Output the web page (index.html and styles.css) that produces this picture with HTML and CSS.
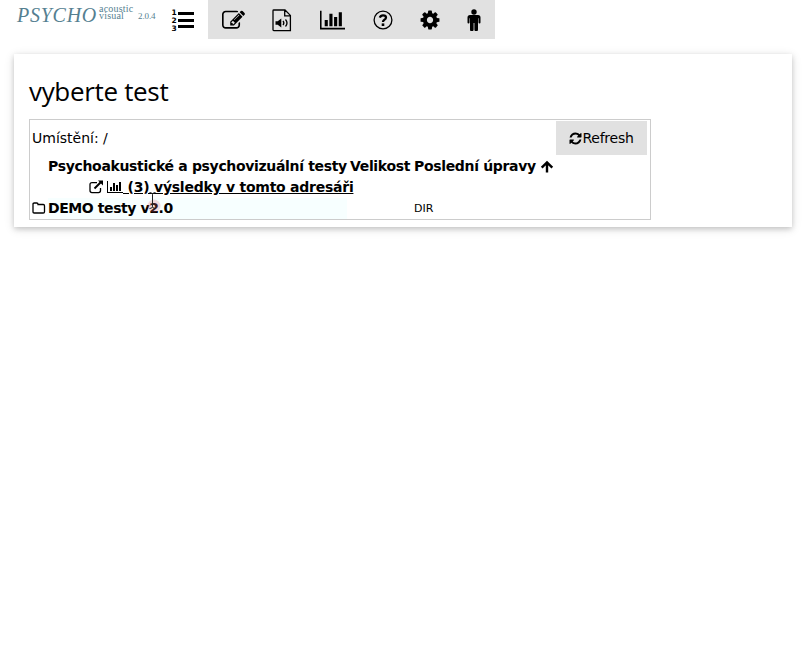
FILE: index.html
```html
<!DOCTYPE html>
<html lang="cs">
<head>
<meta charset="utf-8">
<title>Psycho</title>
<link rel="stylesheet" href="styles.css">
</head>
<body>
<svg class="defs" aria-hidden="true">
  <symbol id="chart" viewBox="0 0 2048 1792"><path d="M640 896v512h-256v-512h256zm384-512v1024h-256v-1024h256zm1024 1152v128h-2048v-1536h128v1408h1920zm-640-896v768h-256v-768h256zm384-384v1152h-256v-1152h256z"/></symbol>
</svg>
<header class="bar">
  <div class="brand"><span class="name">PSYCHO</span><span class="kind"><span>acoustic</span><span>visual</span></span><span class="version">2.0.4</span></div>
  <div class="current"><svg width="24" height="24" viewBox="0 0 24 24"><path d="M7 3h16v3H7zM7 10h16v3H7zM7 16h16v3H7z"/><g class="digits"><text x="0.500" y="6">1</text><text x="0.500" y="14">2</text><text x="0.500" y="22">3</text></g></svg></div>
  <nav class="menu">
    <a><svg width="23" height="23" viewBox="0 0 1792 1792"><path d="M888 1184l116-116-152-152-116 116v56h96v96h56zm440-720q-16-16-33 1l-350 350q-17 17-1 33t33-1l350-350q17-17 1-33zm80 594v190q0 119-84.5 203.5t-203.5 84.5h-832q-119 0-203.5-84.5t-84.5-203.5v-832q0-119 84.5-203.5t203.5-84.5h832q63 0 117 25 15 7 18 23 3 17-9 29l-49 49q-14 14-32 8-23-6-45-6h-832q-66 0-113 47t-47 113v832q0 66 47 113t113 47h832q66 0 113-47t47-113v-126q0-13 9-22l64-64q15-15 35-7t20 29zm-96-738l288 288-672 672h-288v-288zm444 132l-92 92-288-288 92-92q28-28 68-28t68 28l152 152q28 28 28 68t-28 68z"/></svg></a>
    <a><svg class="line" width="20" height="23" viewBox="0 0 20 23"><path d="M1.800 1h11.200l5.400 5.400v15.200H1.800a.8.8 0 0 1-.8-.8V1.800a.8.8 0 0 1 .8-.8zM12.700 1v5.800h5.700M11 12q1.700 2 0 4M13.500 10.500q3 3.500 0 7"/><path class="solid" d="M3.500 12.300h2.200L9.300 9.500v9l-3.600-2.800H3.500z"/></svg></a>
    <a><svg width="25" height="22"><use href="#chart"/></svg></a>
    <a><svg class="line" width="20" height="20" viewBox="0 0 20 20"><circle cx="10" cy="10" r="8.900"/><path class="hook" d="M6.800 7.600q.8-2.300 3.200-2.300 3 0 3 2.300 0 1.400-1.600 2.200-1.400.8-1.400 2.300"/><path class="solid" d="M8.700 13.400h2.600V16H8.700z"/></svg></a>
    <a><svg width="22" height="22" viewBox="0 0 1792 1792"><path d="M1152 896q0-106-75-181t-181-75-181 75-75 181 75 181 181 75 181-75 75-181zm512-109v222q0 12-8 23t-20 13l-185 28q-19 54-39 91 35 50 107 138 10 12 10 25t-9 23q-27 37-99 108t-94 71q-12 0-26-9l-138-108q-44 23-91 38-16 136-29 186-7 28-36 28h-222q-14 0-24.500-8.500t-11.500-21.500l-28-184q-49-16-90-37l-141 107q-10 9-25 9-14 0-25-11-126-114-165-168-7-10-7-23 0-12 8-23 15-21 51-66.500t54-70.500q-27-50-41-99l-183-27q-13-2-21-12.500t-8-23.500v-222q0-12 8-23t19-13l186-28q14-46 39-92-40-57-107-138-10-12-10-24 0-10 9-23 26-36 98.500-107.500t94.500-71.500q13 0 26 10l138 107q44-23 91-38 16-136 29-186 7-28 36-28h222q14 0 24.500 8.500t11.500 21.500l28 184q49 16 90 37l142-107q9-9 24-9 13 0 25 10 129 119 165 170 7 8 7 22 0 12-8 23-15 21-51 66.500t-54 70.500q26 50 41 98l183 28q13 2 21 12.500t8 23.500z"/></svg></a>
    <a><svg width="14" height="22" viewBox="0 0 14 22"><circle cx="7" cy="3" r="2.700"/><path d="M3 6h8q2.500 0 2.500 2.500v5a1 1 0 0 1-2 0V9.200H11v11.300a1.200 1.200 0 0 1-3.600 0V14h-.8v6.500a1.200 1.200 0 0 1-3.600 0V9.200h-.5v4.300a1 1 0 0 1-2 0v-5Q.5 6 3 6z"/></svg></a>
  </nav>
</header>
<main class="card">
  <h1><span>vyberte test</span></h1>
  <section class="browser">
    <div class="location"><span class="path">Umístění: /</span>
      <button><svg width="13" height="13" viewBox="64 64 1664 1664"><path d="M1639 1056q0 5-1 7-64 268-268 434.500t-478 166.500q-146 0-282.500-55t-243.500-157l-129 129q-19 19-45 19t-45-19-19-45v-448q0-26 19-45t45-19h448q26 0 45 19t19 45-19 45l-137 137q71 66 161 102t187 36q134 0 250-65t186-179q11-17 53-117 8-23 30-23h192q13 0 22.500 9.500t9.500 22.500zm25-800v448q0 26-19 45t-45 19h-448q-26 0-45-19t-19-45 19-45l138-138q-148-137-349-137-134 0-250 65t-186 179q-11 17-53 117-8 23-30 23h-199q-13 0-22.500-9.500t-9.500-22.500v-7q65-268 270-434.500t480-166.500q146 0 284 55.500t245 156.500l130-129q19-19 45-19t45 19 19 45z"/></svg><span>Refresh</span></button>
    </div>
    <div class="row head"><span></span><span class="title">Psychoakustické a psychovizuální testy</span><span class="size">Velikost</span><span class="date"><span>Poslední úpravy</span><svg width="14" height="14" viewBox="0 0 14 14"><path class="arrow" d="M7 12.500V2.500M1.700 7.700 7 2.400l5.300 5.300"/></svg></span></div>
    <div class="results"><svg class="line" width="15" height="14" viewBox="0 0 15 14"><path d="M8 2.600H3Q1 2.600 1 4.600v6Q1 12.600 3 12.600h6.500q2 0 2-2V8"/><path class="share" d="M5.500 8.500 12 2"/><path class="solid" d="M9 .5h5v5z"/></svg><a><svg width="16" height="14"><use href="#chart"/></svg><span>&nbsp;(3) výsledky v tomto adresáři</span></a></div>
    <div class="row item"><svg class="line" width="15" height="14" viewBox="0 0 15 14"><path d="M1 3.200Q1 2 2.200 2h2.600Q6 2 6 3.200v.3h5.300q1.200 0 1.200 1.200v6.100q0 1.200-1.200 1.200H2.200Q1 12 1 10.800z"/></svg><span class="folder">DEMO testy v2.0<svg class="pointer" width="16" height="25" viewBox="0 0 16 25"><circle cx="9" cy="17" r="6.500"/><path d="M4.500 3.500q3 0 3 2 0-2 3-2M7.500 5.500v12M4.500 19.500q3 0 3-2 0 2 3 2"/></svg></span><span></span><span class="dir">DIR</span></div>
  </section>
</main>
</body>
</html>
```
FILE: styles.css
```css
body { margin: 0; min-height: 648px; background: #fff; color: #000; font: 14px/21px "DejaVu Sans", sans-serif; }
svg { display: block; flex: none; }
.defs { width: 0; height: 0; overflow: hidden; position: absolute; }
.line { fill: none; stroke: #000; stroke-width: 1.3; }
.solid { fill: #000; stroke: none; }
.bar { display: flex; height: 39px; }
.brand { display: flex; width: 154px; padding-left: 17px; color: #557f91; font-family: "Liberation Serif", serif; }
.name { width: 82px; font-size: 20px; line-height: 31px; font-style: italic; letter-spacing: 0.75px; }
.kind { display: flex; flex-direction: column; width: 39px; padding-top: 5px; font-size: 10px; line-height: 7px; letter-spacing: 0.2px; }
.version { font-size: 9px; line-height: 32px; letter-spacing: -0.1px; }
.current { width: 37px; padding-top: 9px; }
.digits { font: bold 7.5px "DejaVu Sans", sans-serif; }
.menu { display: grid; grid-template-columns: 50px 48px 53px 48px 46px 42px; width: 287px; background: #e1e1e1; }
.menu a { display: flex; align-items: center; justify-content: center; padding-top: 1px; }
.menu a:last-child { padding-right: 1px; }
.hook { stroke-width: 2.3; }
.card { box-sizing: border-box; width: 778px; height: 173px; margin: 15px 0 0 14px; padding: 18px 15px 7px; background: #fff; box-shadow: 0 2px 5px rgba(0,0,0,.16), 0 2px 10px rgba(0,0,0,.12); }
h1 { margin: 0; height: 47px; font: 26px/39px "Open Sans", "Noto Sans", sans-serif; letter-spacing: -0.33px; }
.browser { box-sizing: border-box; width: 622px; height: 101px; border: 1px solid #ccc; padding: 1px 3px 0 2px; }
.location { display: flex; justify-content: space-between; align-items: center; height: 34px; }
.path { letter-spacing: 0; }
button { display: flex; align-items: center; justify-content: center; width: 91px; height: 34px; padding: 0; border: 0; background: #e1e1e1; color: #000; font: inherit; letter-spacing: -0.25px; }
.row { display: grid; grid-template-columns: 16px 302px 64px 1fr; align-items: center; height: 21px; white-space: nowrap; }
.head, .results { position: relative; top: 1px; font-weight: bold; letter-spacing: -0.33px; }
.folder { font-weight: bold; letter-spacing: -0.42px; }
.date, .results, .results a { display: flex; align-items: center; }
.date { gap: 4px; }
.arrow { fill: none; stroke: #000; stroke-width: 2.4; }
.results { height: 21px; padding-left: 57px; gap: 3px; letter-spacing: -0.25px; }
.results svg { position: relative; top: -1px; }
.results a { text-decoration: underline; }
.share { stroke-width: 2; }
.item { height: 22px; }
.folder { position: relative; width: 299px; background: #f7ffff; }
.pointer { position: absolute; left: 97px; top: -9px; fill: rgba(230,100,110,.25); }
.pointer path { fill: none; stroke: #222; stroke-width: 1; }
.dir { font-size: 11px; }
```
